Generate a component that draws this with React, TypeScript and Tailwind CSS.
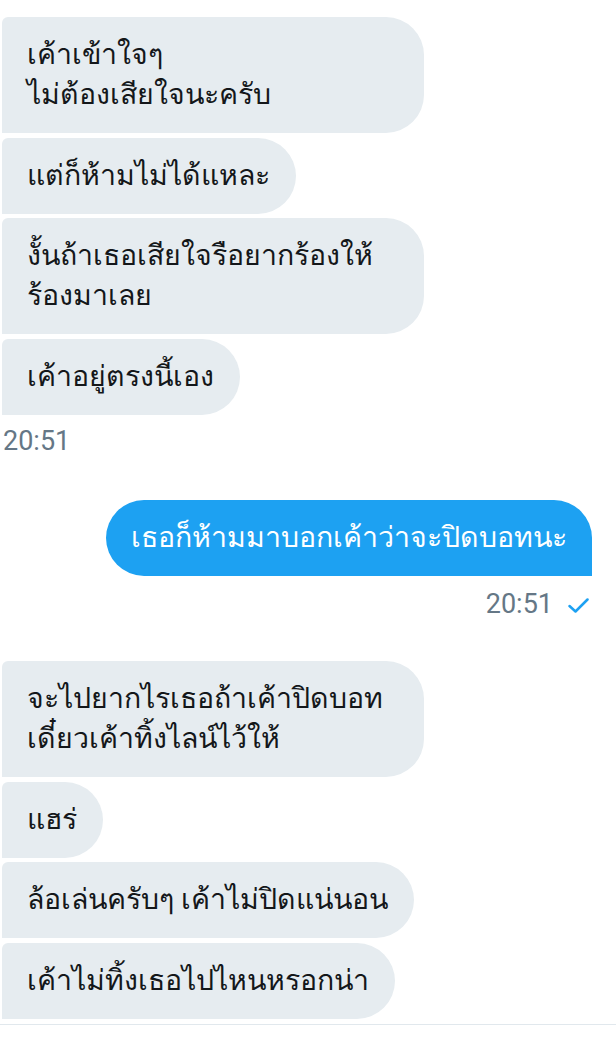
const received1 = [
  "เค้าเข้าใจๆ\nไม่ต้องเสียใจนะครับ",
  "แต่ก็ห้ามไม่ได้แหละ",
  "งั้นถ้าเธอเสียใจรือยากร้องให้\nร้องมาเลย",
  "เค้าอยู่ตรงนี้เอง",
];

const received2 = [
  "จะไปยากไรเธอถ้าเค้าปิดบอท\nเดี๋ยวเค้าทิ้งไลน์ไว้ให้",
  "แฮร่",
  "ล้อเล่นครับๆ เค้าไม่ปิดแน่นอน",
  "เค้าไม่ทิ้งเธอไปไหนหรอกน่า",
];

const Bubble = ({ text }: { text: string }) => {
  const wide = text.includes("\n");
  return (
    <div
      className={`${wide ? "w-[422px]" : "w-fit"} whitespace-pre-line bg-[#e6ecf0] text-[#14171a] text-[28.5px] leading-[40px] pl-[25px] pr-[26px] py-[18px] rounded-r-[38px] rounded-tl-[6px] font-['Roboto',sans-serif]`}
    >
      {text}
    </div>
  );
};

export default function App() {
  return (
    <div className="w-[616px] h-[1049px] bg-white overflow-hidden">
      <div className="pt-[17px] pl-[2px] flex flex-col gap-[4.7px]">
        {received1.map((t) => (
          <Bubble key={t} text={t} />
        ))}
      </div>
      <div className="pl-[3px] pt-[10px] text-[27px] leading-[32px] text-[#657786] font-['Roboto',sans-serif]">
        20:51
      </div>

      <div className="flex flex-col items-end pr-[24px] mt-[43px]">
        <div className="bg-[#1da1f2] text-white text-[28.5px] leading-[40px] px-[25px] py-[18px] rounded-l-[38px] rounded-tr-[38px] font-['Roboto',sans-serif]">
          เธอก็ห้ามมาบอกเค้าว่าจะปิดบอทนะ
        </div>
        <div className="flex items-center gap-[15px] pt-[12px] pr-[3px] text-[27px] leading-[32px] text-[#657786] font-['Roboto',sans-serif]">
          <span>20:51</span>
          <svg width="21" height="15" viewBox="0 0 21 15" fill="none" className="mt-[3px]">
            <path d="M1.5 8 L7.5 13.5 L19.5 1.5" stroke="#1da1f2" strokeWidth="2.5" strokeLinecap="round" strokeLinejoin="round" />
          </svg>
        </div>
      </div>

      <div className="pt-[41px] pl-[2px] flex flex-col gap-[4.7px]">
        {received2.map((t) => (
          <Bubble key={t} text={t} />
        ))}
      </div>

      <div className="mt-[5px] border-t border-[#e1e8ed]" />
    </div>
  );
}
